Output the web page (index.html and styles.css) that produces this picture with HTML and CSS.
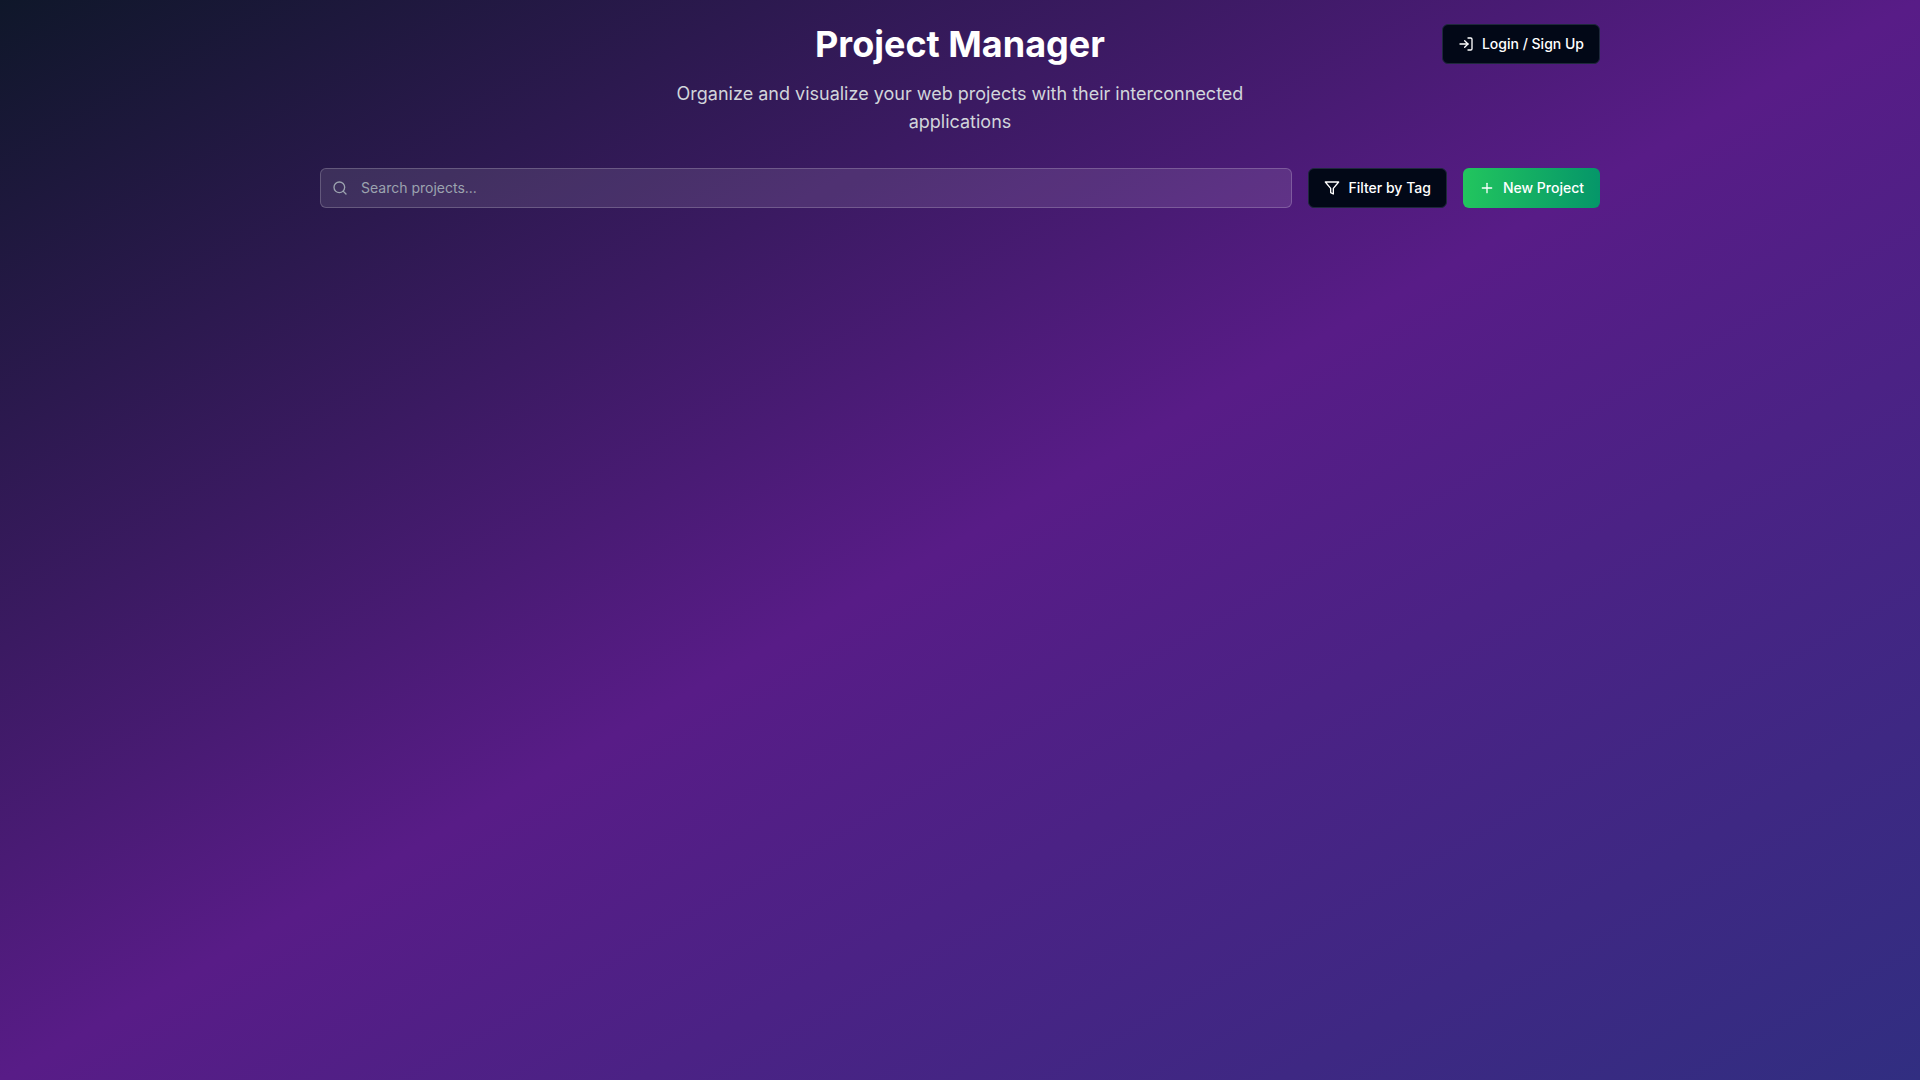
FILE: index.html
```html
<!DOCTYPE html>
<html lang="en">

<head>
  <meta charset="UTF-8">
  <meta name="viewport" content="width=device-width, initial-scale=1.0">
  <title>Project Manager</title>
  <link rel="stylesheet" href="styles.css">
</head>

<body>

  <div class="container">
    <header class="header">
      <div class="intro">
        <h1>Project Manager</h1>
        <p>Organize and visualize your web projects with their interconnected applications</p>
      </div>
      <button type="button" class="btn btn-dark login">
        <svg class="icon" viewBox="0 0 24 24" aria-hidden="true">
          <path d="M15 3h4a2 2 0 0 1 2 2v14a2 2 0 0 1-2 2h-4" />
          <polyline points="10 17 15 12 10 7" />
          <line x1="15" x2="3" y1="12" y2="12" />
        </svg>
        Login / Sign Up
      </button>
    </header>

    <main class="toolbar">
      <label class="search">
        <svg class="icon" viewBox="0 0 24 24" aria-hidden="true">
          <circle cx="11" cy="11" r="8" />
          <path d="m21 21-4.3-4.3" />
        </svg>
        <input type="text" placeholder="Search projects..." aria-label="Search projects">
      </label>
      <button type="button" class="btn btn-dark">
        <svg class="icon" viewBox="0 0 24 24" aria-hidden="true">
          <polygon points="22 3 2 3 10 12.46 10 19 14 21 14 12.46 22 3" />
        </svg>
        Filter by Tag
      </button>
      <button type="button" class="btn btn-new">
        <svg class="icon" viewBox="0 0 24 24" aria-hidden="true">
          <path d="M5 12h14" />
          <path d="M12 5v14" />
        </svg>
        New Project
      </button>
    </main>
  </div>

</body>

</html>
```

FILE: styles.css
```css
* {
  box-sizing: border-box;
}

body {
  margin: 0;
  min-height: 100vh;
  padding: 24px;
  font-family: Inter, sans-serif;
  color: #fff;
  background: linear-gradient(to bottom right, #0f172a, #581c87, #312e81);
}

.container {
  max-width: 1280px;
  margin: 0 auto;
}

.header {
  display: grid;
  grid-template-columns: 1fr minmax(0, 576px) 1fr;
  align-items: start;
  margin-bottom: 32px;
}

.intro {
  grid-column: 2;
  text-align: center;
}

h1 {
  margin: 0 0 16px;
  font-size: 36px;
  line-height: 40px;
  font-weight: 700;
}

p {
  margin: 0;
  font-size: 18px;
  line-height: 28px;
  color: #d1d5db;
}

.login {
  justify-self: end;
}

.toolbar {
  display: flex;
  gap: 16px;
}

.btn {
  display: inline-flex;
  align-items: center;
  gap: 8px;
  height: 40px;
  padding: 0 16px;
  border: none;
  border-radius: 6px;
  font-family: inherit;
  font-size: 14px;
  font-weight: 500;
  line-height: 20px;
  color: #fff;
  white-space: nowrap;
  cursor: pointer;
}

.btn-dark {
  padding: 0 15px;
  background: #020817;
  border: 1px solid #1e293b;
}

.btn-new {
  background: linear-gradient(to right, #22c55e, #059669);
}

.icon {
  width: 16px;
  height: 16px;
  flex-shrink: 0;
  fill: none;
  stroke: currentColor;
  stroke-width: 2;
  stroke-linecap: round;
  stroke-linejoin: round;
}

.search {
  display: flex;
  align-items: center;
  flex: 1;
  gap: 13px;
  height: 40px;
  padding: 0 11px;
  border: 1px solid rgba(255, 255, 255, 0.2);
  border-radius: 6px;
  background: rgba(255, 255, 255, 0.1);
  color: #9ca3af;
}

.search input {
  flex: 1;
  min-width: 0;
  padding: 0;
  border: none;
  outline: none;
  background: transparent;
  font-family: inherit;
  font-size: 14px;
  line-height: 20px;
  color: #fff;
}

.search input::placeholder {
  color: #9ca3af;
}
```
